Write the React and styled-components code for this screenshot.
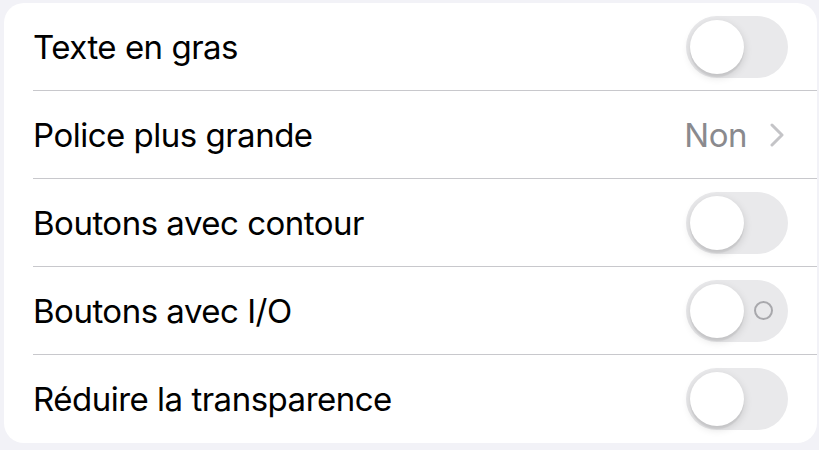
import styled, { createGlobalStyle } from 'styled-components';

const GlobalStyle = createGlobalStyle`
    body {
        margin: 0;
        background: #f2f2f7;
        font-family: Inter, "Liberation Sans", sans-serif;
        -webkit-font-smoothing: antialiased;
    }
`;

const Page = styled.div`
    width: 819px;
    height: 450px;
    padding: 3px 2px 0 4px;
    box-sizing: border-box;
`;

const Card = styled.div`
    background: #ffffff;
    border-radius: 20px;
    overflow: hidden;
    padding-left: 29px;
`;

const Row = styled.div`
    display: flex;
    align-items: center;
    justify-content: space-between;
    height: 88px;
    box-sizing: border-box;
    padding: 0 29px 0 0;
    border-bottom: ${props => (props.last ? 'none' : '1px solid #c8c8cc')};
`;

const Label = styled.span`
    font-size: 33px;
    color: #000000;
    letter-spacing: -0.5px;
`;

const Detail = styled.div`
    display: flex;
    align-items: center;
    gap: 23px;
    margin-right: 4px;
    font-size: 33px;
    color: #8a8a8e;
    letter-spacing: -0.5px;
`;

const Track = styled.div`
    position: relative;
    width: 102px;
    height: 62px;
    border-radius: 31px;
    background: #e9e9eb;
    display: flex;
    align-items: center;
    justify-content: flex-end;
    padding-right: 15px;
    box-sizing: border-box;
`;

const Knob = styled.div`
    position: absolute;
    left: 4px;
    top: 4px;
    width: 54px;
    height: 54px;
    border-radius: 50%;
    background: #ffffff;
    box-shadow: 0 3px 8px rgba(0, 0, 0, 0.15), 0 3px 1px rgba(0, 0, 0, 0.06);
`;

const OffMark = styled.div`
    width: 15px;
    height: 15px;
    border-radius: 50%;
    border: 2px solid #a8a8ac;
`;

const Toggle = ({labels}) => (
    <Track>
        {labels ? <OffMark/> : null}
        <Knob/>
    </Track>
);

const Chevron = () => (
    <svg width="14" height="24" viewBox="0 0 14 24">
        <path d="M2 2 L12 12 L2 22" fill="none" stroke="#c4c4c7" strokeWidth="3"
              strokeLinecap="round" strokeLinejoin="round"/>
    </svg>
);

const items = [
    {label: 'Texte en gras', kind: 'toggle'},
    {label: 'Police plus grande', kind: 'detail', value: 'Non'},
    {label: 'Boutons avec contour', kind: 'toggle'},
    {label: 'Boutons avec I/O', kind: 'toggle', labels: true},
    {label: 'Réduire la transparence', kind: 'toggle'},
];

export default function App() {
    return (
        <>
            <GlobalStyle/>
            <Page>
                <Card>
                    {items.map((item, index) => (
                        <Row key={index} last={index === items.length - 1}>
                            <Label>{item.label}</Label>
                            {item.kind === 'toggle' ?
                                <Toggle labels={item.labels}/> :
                                <Detail>
                                    {item.value}
                                    <Chevron/>
                                </Detail>}
                        </Row>
                    ))}
                </Card>
            </Page>
        </>
    );
}
